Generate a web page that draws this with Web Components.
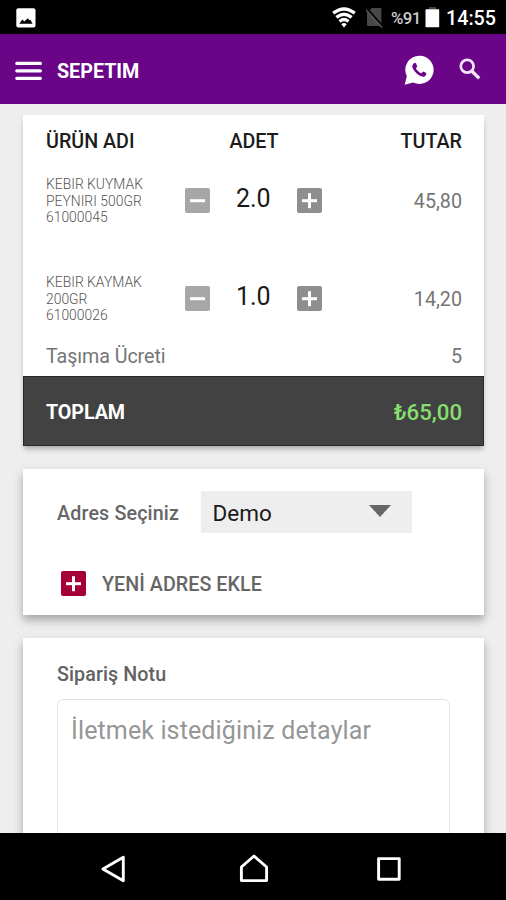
<!DOCTYPE html>
<html lang="tr">
<head>
<meta charset="utf-8">
<title>Sepetim</title>
<style>
html, body { height: 100%; }
body {
  margin: 0;
  overflow: hidden;
  background: #eee;
  font-family: Roboto, "Noto Sans", sans-serif;
  font-size: 19.7px;
}
</style>
</head>
<body>
<cart-app></cart-app>
<script>
class BaseElement extends HTMLElement {
  constructor() {
    super();
    const template = document.createElement("template");
    template.innerHTML = this.render();
    this.attachShadow({ mode: "open" }).appendChild(template.content.cloneNode(true));
  }
}

class StatusBar extends BaseElement {
  render() {
    return `
<style>
:host {
  display: flex;
  align-items: center;
  box-sizing: border-box;
  height: 34px;
  padding: 1px 11px 0 16px;
  background: #000;
  color: #fff;
}
svg { display: block; flex: none; }
.space { flex: 1; }
.sim { margin-left: 10px; }
.percent { margin: 1px 6px 0 8px; font-size: 16.8px; font-weight: 500; color: #ccc; width: 28px; white-space: nowrap; letter-spacing: -0.6px; }
.clock { margin: 2px 0 0 6px; font-weight: 500; width: 49px; white-space: nowrap; }
</style>
<svg width="20" height="20" viewBox="0 0 20 20"><rect x=".3" y=".3" width="19.2" height="19.2" rx="2" fill="#fff"/><path d="M3.3 15.8 6.3 11.5 8.3 13.6 11.8 10.2 13.4 12.3 14.3 11.8 16.6 15.8Z" fill="#000"/></svg>
<span class="space"></span>
<svg width="24" height="21" viewBox="0 0 24 21" fill="none" stroke="#fff" stroke-width="3.4"><path d="M1.2 6.2Q12-2.4 22.8 6.2M4.4 10.4Q12 4 19.6 10.4M7.6 14.5Q12 10.6 16.4 14.5"/><path d="M9.3 17.2Q12 14.9 14.7 17.2L12 20.4Z" fill="#fff" stroke="none"/></svg>
<svg class="sim" width="17" height="21" viewBox="0 0 17 21"><path d="M5.6 1H14q1.4 0 1.4 1.4V19H2q-1 0-1-1V6Z" fill="#484848"/><path d="M.6 1.6 16.5 19" stroke="#000" stroke-width="2.2"/><path d="M0 2.8 16 20.4" stroke="#585858" stroke-width="1.5"/></svg>
<span class="percent">%91</span>
<svg width="15" height="21" viewBox="0 0 15 21"><path d="M4 0h7v2.5H4z" fill="#444"/><rect x=".5" y="2.3" width="13.7" height="18" rx=".8" fill="#fff"/></svg>
<span class="clock">14:55</span>`;
  }
}

class AppBar extends BaseElement {
  render() {
    return `
<style>
:host {
  display: flex;
  align-items: center;
  box-sizing: border-box;
  height: 70px;
  padding: 0 25px 0 15px;
  background: #6a0588;
  color: #fff;
}
h1 { flex: 1; margin: 5px 0 0 15px; font-size: 19.7px; line-height: 24px; font-weight: 700; }
svg { display: block; flex: none; }
.chat { margin-top: 1px; margin-right: 25px; }
.menu { margin-top: 3px; }
</style>
<svg class="menu" width="27" height="20" viewBox="0 0 27 20" stroke="#fff" stroke-width="3.2" stroke-linecap="round"><path d="M1.8 2.4h23.6M1.8 9.8h23.6M1.8 17.3h23.6"/></svg>
<h1><slot></slot></h1>
<svg class="chat" width="30" height="30" viewBox="0 0 30 30"><path d="M15.4.7A14.1 14.1 0 1 1 9.2 27.4L.7 29.8 2.8 21.2A14.1 14.1 0 0 1 15.4.7Z" fill="#fff"/><path d="M9.7 8.4Q11.1 7.2 12 8.6L13.3 11.4 11.8 13.6Q13.8 16.9 17.1 18.5L19.1 16.6 22.3 18.1Q22.8 20.3 20.6 21.4 17.8 22.7 12.9 18.7 7.9 13.8 8.3 11 8.5 9.4 9.7 8.4Z" fill="#6a0588"/></svg>
<svg width="22" height="22" viewBox="0 0 22 22" fill="none" stroke="#f4e6f8"><circle cx="8.2" cy="8.3" r="6.4" stroke-width="2.7"/><path d="M12.8 13 20.2 20.4" stroke-width="3.4"/></svg>`;
  }
}

class IconButton extends BaseElement {
  render() {
    return `
<style>
:host { display: block; flex: none; width: 25px; height: 25px; color: #8e8e8e; }
:host([kind="minus"]) { color: #a7a7a7; }
:host([kind="add"]) { color: #a40035; }
:host([kind="minus"]) .down { display: none; }
svg { display: block; }
</style>
<svg width="25" height="25" viewBox="0 0 25 25"><rect width="25" height="25" rx="2" fill="currentColor"/><path d="M5 12.7h15" stroke="#fff" stroke-width="3"/><path class="down" d="M12.5 5.2v15" stroke="#fff" stroke-width="3"/></svg>`;
  }
}

class CartCard extends BaseElement {
  render() {
    return `
<style>
:host {
  display: block;
  box-sizing: border-box;
  flex: none;
  background: #fff;
  box-shadow: 0 5px 11px rgba(0, 0, 0, .2), 0 5px 6px rgba(0, 0, 0, .12);
}
</style>
<slot></slot>`;
  }
}

class CartItem extends BaseElement {
  render() {
    return `
<style>
:host {
  display: grid;
  grid-template-columns: 138.5px 25px 87.5px 25px 1fr;
  align-items: center;
  height: 98px;
  padding: 0 22px 0 23px;
  color: #757575;
}
.name { margin-top: 2px; font-size: 13.9px; line-height: 16.4px; font-weight: 300; color: #555; }
.count { margin-top: -2px; font-size: 25px; line-height: 30px; text-align: center; color: #1a1a1a; }
.price { margin-top: 2px; text-align: right; }
</style>
<div class="name"><slot></slot></div>
<icon-button kind="minus"></icon-button>
<div class="count"><slot name="count"></slot></div>
<icon-button kind="plus"></icon-button>
<div class="price"><slot name="price"></slot></div>`;
  }
}

class CartSummary extends BaseElement {
  render() {
    return `
<style>
:host { display: block; }
.head, .fee, .total { display: grid; padding: 0 22px 0 23px; }
.head {
  grid-template-columns: 1fr 1fr 1fr;
  height: 36px;
  padding-top: 15px;
  box-sizing: border-box;
  font-weight: 500;
  line-height: 24px;
  color: #1c1c1c;
}
.head span:nth-child(2) { text-align: center; }
.head span:nth-child(3) { text-align: right; }
.fee, .total { grid-template-columns: 1fr auto; }
.fee { height: 29px; line-height: 19px; color: #757575; }
.fee span:first-child { letter-spacing: -.08px; }
.total {
  box-sizing: border-box;
  height: 70px;
  align-items: center;
  padding-top: 2px;
  background: #424242;
  color: #fff;
  font-weight: 700;
  box-shadow: inset 0 0 0 1px #282828;
}
.total span:first-child { letter-spacing: -.1px; }
.sum { font-size: 22.2px; font-weight: 500; color: #87df70; }
</style>
<div class="head"><span>ÜRÜN ADI</span><span>ADET</span><span>TUTAR</span></div>
<slot></slot>
<div class="fee"><span>Taşıma Ücreti</span><span>5</span></div>
<div class="total"><span>TOPLAM</span><span class="sum">₺65,00</span></div>`;
  }
}

class AddressPicker extends BaseElement {
  render() {
    return `
<style>
:host {
  display: block;
  box-sizing: border-box;
  height: 146px;
  padding: 22px 34px 0;
  color: #666;
  font-weight: 500;
}
.pick, .add { display: flex; align-items: center; }
.pick { height: 42px; }
.label { width: 144px; padding-top: 2px; white-space: nowrap; letter-spacing: .15px; }
.select {
  display: flex;
  align-items: center;
  justify-content: space-between;
  box-sizing: border-box;
  width: 211px;
  height: 42px;
  padding: 2px 21px 0 11.5px;
  background: #eee;
  color: #1a1a1a;
  font-size: 22.5px;
  font-weight: 400;
}
.select svg { margin-top: -5px; }
.add { gap: 16px; margin-top: 38px; padding-left: 4px; }
.add span { padding-top: 2px; letter-spacing: .05px; }
</style>
<div class="pick">
  <span class="label">Adres Seçiniz</span>
  <div class="select"><span><slot></slot></span><svg width="22" height="12" viewBox="0 0 22 12"><path d="M0 0h22L11 12z" fill="#666"/></svg></div>
</div>
<div class="add"><icon-button kind="add"></icon-button><span>YENİ ADRES EKLE</span></div>`;
  }
}

class OrderNote extends BaseElement {
  render() {
    return `
<style>
:host { display: block; padding: 25px 34px 0; }
label { display: block; line-height: 24px; font-weight: 500; color: #626262; letter-spacing: .08px; }
.field {
  box-sizing: border-box;
  height: 190px;
  margin-top: 12px;
  padding: 16px 13px;
  border: 1.4px solid #e2e2e2;
  border-radius: 6px;
  font-size: 25px;
  line-height: 30px;
  letter-spacing: .13px;
  color: #969696;
  white-space: nowrap;
}
</style>
<label>Sipariş Notu</label>
<div class="field"><slot></slot></div>`;
  }
}

class NavBar extends BaseElement {
  render() {
    return `
<style>
:host { display: grid; grid-template-columns: repeat(3, 135.5px); justify-content: center; justify-items: center; align-items: center; box-sizing: border-box; height: 67px; padding: 5px 0 0 1px; background: #000; }
svg { display: block; fill: none; stroke: #fff; stroke-width: 2.9; stroke-linejoin: round; }
.back { margin-right: 10px; }
</style>
<svg class="back" width="26" height="30" viewBox="0 0 26 30"><path d="M2.9 15 23.3 3.2V26.8Z"/></svg>
<svg width="30" height="30" viewBox="0 0 30 30"><path d="M2.4 26.6V13L15 2 27.6 13V26.6Z"/></svg>
<svg width="26" height="30" viewBox="0 0 26 30"><path d="M2.6 4.6H23.2V25.2H2.6Z"/></svg>`;
  }
}

class CartApp extends BaseElement {
  render() {
    return `
<style>
:host { display: flex; flex-direction: column; height: 900px; }
main { flex: 1; min-height: 0; overflow: hidden; display: flex; flex-direction: column; padding: 11px 22px 0 23px; }
cart-card + cart-card { margin-top: 23px; }
.note { height: 300px; }
.list { box-shadow: 0 4px 5px -1px rgba(0, 0, 0, .28); }
</style>
<status-bar></status-bar>
<app-bar>SEPETIM</app-bar>
<main>
  <cart-card class="list">
    <cart-summary>
      <cart-item>KEBIR KUYMAK<br>PEYNIRI 500GR<br>61000045<span slot="count">2.0</span><span slot="price">45,80</span></cart-item>
      <cart-item>KEBIR KAYMAK<br>200GR<br>61000026<span slot="count">1.0</span><span slot="price">14,20</span></cart-item>
    </cart-summary>
  </cart-card>
  <cart-card><address-picker>Demo</address-picker></cart-card>
  <cart-card class="note"><order-note>İletmek istediğiniz detaylar</order-note></cart-card>
</main>
<nav-bar></nav-bar>`;
  }
}

customElements.define("status-bar", StatusBar);
customElements.define("app-bar", AppBar);
customElements.define("icon-button", IconButton);
customElements.define("cart-card", CartCard);
customElements.define("cart-item", CartItem);
customElements.define("cart-summary", CartSummary);
customElements.define("address-picker", AddressPicker);
customElements.define("order-note", OrderNote);
customElements.define("nav-bar", NavBar);
customElements.define("cart-app", CartApp);
</script>
</body>
</html>
